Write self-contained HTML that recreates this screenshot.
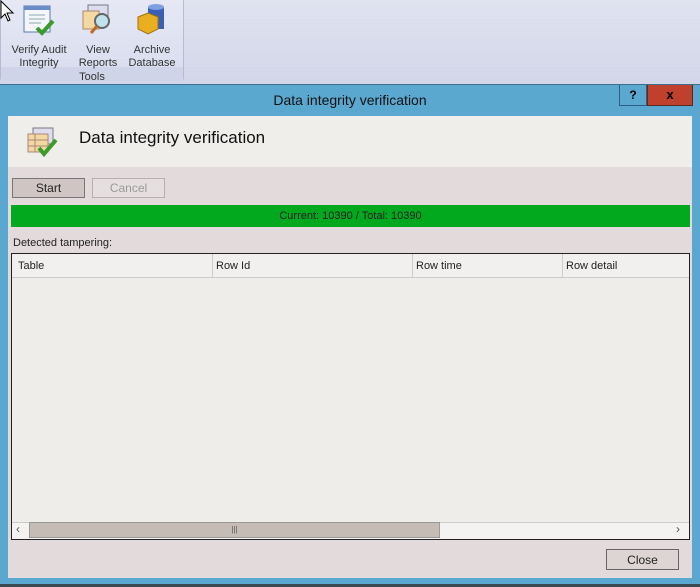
<!DOCTYPE html>
<html><head><style>
body{margin:0;width:700px;height:587px;overflow:hidden;background:#d6daea;font-family:"Liberation Sans",sans-serif;position:relative}
.a{position:absolute}
.btn{position:absolute;font-size:12px;text-align:center;line-height:18px;box-sizing:border-box}
</style></head><body>
<div class="a" style="left:0;top:0;width:700px;height:84px;background:linear-gradient(#e0e3f0,#d2d6e8)"></div>
<div class="a" style="left:0;top:0;width:184px;height:81px;background:linear-gradient(#e6e9f4,#d8dcee);border:1px solid #b6bcd2;border-top:none;border-radius:0 0 3px 3px;box-sizing:border-box"></div>
<div class="a" style="left:1px;top:67px;width:182px;height:14px;background:#cfd4e8"></div>
<div class="a" style="left:0;top:68px;width:184px;text-align:center;font-size:11px;color:#333;top:69px"></div>
<div class="a" style="left:0;top:69px;width:184px;text-align:center;font-size:11px;color:#333;padding-top:2px">Tools</div>
<div class="a" style="left:4px;top:39px;width:70px;text-align:center;font-size:11px;line-height:13px;color:#333;padding-top:5px">Verify Audit<br>Integrity</div>
<div class="a" style="left:75px;top:39px;width:46px;text-align:center;font-size:11px;line-height:13px;color:#333;padding-top:5px">View<br>Reports</div>
<div class="a" style="left:126px;top:39px;width:52px;text-align:center;font-size:11px;line-height:13px;color:#333;padding-top:5px">Archive<br>Database</div>
<svg class="a" style="left:22px;top:4px" width="34" height="32"><rect x="2" y="2" width="26" height="26" fill="#f4f6fb" stroke="#5a78b0"/><rect x="2" y="2" width="26" height="4" fill="#6a8cc8"/><path d="M7 11h16M7 15h16M7 19h12" stroke="#8aa" /><path d="M15 24l5 5 11-12" stroke="#3a9a2a" stroke-width="4" fill="none"/></svg>
<svg class="a" style="left:82px;top:3px" width="34" height="34"><rect x="6" y="2" width="20" height="16" fill="#dde" stroke="#778"/><rect x="1" y="8" width="16" height="18" fill="#f3d9a0" stroke="#a87"/><circle cx="20" cy="18" r="7" fill="#bfe3ee" stroke="#666" stroke-width="2"/><path d="M15 23l-6 7" stroke="#c06a20" stroke-width="3"/></svg>
<svg class="a" style="left:136px;top:3px" width="34" height="34"><rect x="12" y="4" width="16" height="22" fill="#3b5fb5"/><ellipse cx="20" cy="4" rx="8" ry="3" fill="#7da0e0"/><path d="M2 14l10-4 10 4v12l-10 5-10-5z" fill="#e8b020" stroke="#a07010"/></svg>
<svg class="a" style="left:0;top:0" width="14" height="22"><path d="M1 1v17l4-4 3 7 2-1-3-7h6z" fill="#fff" stroke="#000"/></svg>
<div class="a" style="left:0;top:84px;width:700px;height:500px;background:#5aa8d0;border-top:1px solid #3a6f90;box-sizing:border-box"></div>
<div class="a" style="left:0;top:584px;width:700px;height:3px;background:#3a4a50"></div>
<div class="a" style="left:0;top:92px;width:700px;text-align:center;font-size:14px;color:#111">Data integrity verification</div>
<div class="a" style="left:619px;top:85px;width:28px;height:21px;border:1px solid #2f5f80;border-top:none;box-sizing:border-box;font-weight:bold;font-size:12px;text-align:center;line-height:20px">?</div>
<div class="a" style="left:647px;top:85px;width:46px;height:21px;background:#c0402e;border:1px solid #5a2a20;border-top:none;box-sizing:border-box;font-weight:bold;font-size:13px;text-align:center;line-height:20px">x</div>
<div class="a" style="left:8px;top:116px;width:684px;height:462px;background:#e3dadb"></div>
<div class="a" style="left:8px;top:116px;width:684px;height:51px;background:#f0eeeb"></div>
<svg class="a" style="left:27px;top:126px" width="34" height="32"><rect x="6" y="2" width="20" height="16" fill="#dde" stroke="#778"/><rect x="1" y="8" width="20" height="18" fill="#f3d9a0" stroke="#a87"/><path d="M1 14h20M1 20h20M8 8v18" stroke="#a87"/><path d="M12 22l5 6 12-14" stroke="#3a9a2a" stroke-width="4" fill="none"/></svg>
<div class="a" style="left:79px;top:128px;font-size:17px;color:#111">Data integrity verification</div>
<div class="btn" style="left:12px;top:178px;width:73px;height:20px;background:#cfc6c4;border:1px solid #777;color:#222">Start</div>
<div class="btn" style="left:92px;top:178px;width:73px;height:20px;background:#e6dfdf;border:1px solid #b8b0b0;color:#999">Cancel</div>
<div class="a" style="left:11px;top:205px;width:679px;height:22px;background:#02a81e;text-align:center;font-size:11px;line-height:22px;color:#222">Current: 10390 / Total: 10390</div>
<div class="a" style="left:13px;top:237px;font-size:11px;color:#222">Detected tampering:</div>
<div class="a" style="left:11px;top:253px;width:679px;height:287px;background:#efedea;border:1px solid #222;box-sizing:border-box"></div>
<div class="a" style="left:12px;top:254px;width:677px;height:23px;background:#f2f0ef;border-bottom:1px solid #ccc;font-size:11px;color:#222;line-height:24px">
<span class="a" style="left:6px">Table</span><span class="a" style="left:204px">Row Id</span><span class="a" style="left:404px">Row time</span><span class="a" style="left:554px">Row detail</span>
<div class="a" style="left:200px;top:0;width:1px;height:23px;background:#ccc"></div>
<div class="a" style="left:400px;top:0;width:1px;height:23px;background:#ccc"></div>
<div class="a" style="left:550px;top:0;width:1px;height:23px;background:#ccc"></div></div>
<div class="a" style="left:12px;top:522px;width:677px;height:16px;background:#f4f3f2;border-top:1px solid #ccc"></div>
<div class="a" style="left:29px;top:522px;width:411px;height:16px;background:#c5bcb6;border:1px solid #999;box-sizing:border-box;text-align:center;font-size:8px;line-height:14px;color:#555">|||</div>
<div class="a" style="left:16px;top:522px;font-size:12px;color:#555">‹</div>
<div class="a" style="left:676px;top:522px;font-size:12px;color:#555">›</div>
<div class="btn" style="left:606px;top:549px;width:73px;height:21px;background:#ddd5d4;border:1px solid #666;color:#222;line-height:20px">Close</div>
</body></html>
